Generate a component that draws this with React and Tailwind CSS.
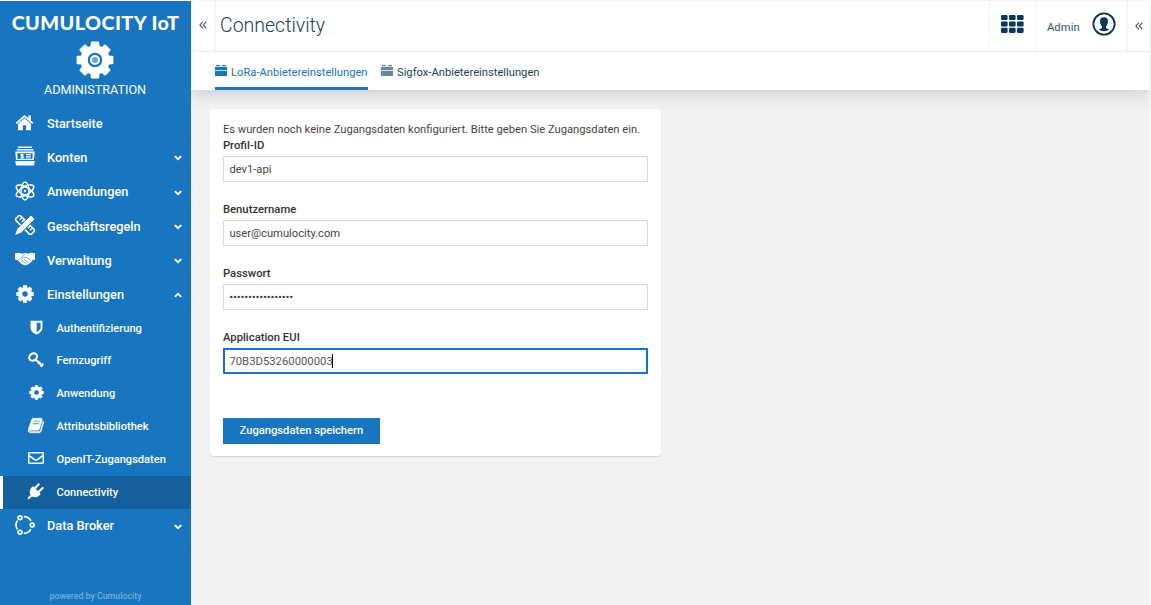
import React from 'react';
import { FaRegEnvelope } from 'react-icons/fa';

function gearPath(teeth, outer, inner, hole) {
  const pts = [];
  for (let i = 0; i < teeth; i++) {
    const a = (i * 2 * Math.PI) / teeth;
    const w = Math.PI / teeth;
    [[-0.62, inner], [-0.46, outer], [0.46, outer], [0.62, inner]].forEach(([k, r]) => {
      const t = a + k * w;
      pts.push(`${(12 + r * Math.sin(t)).toFixed(2)} ${(12 - r * Math.cos(t)).toFixed(2)}`);
    });
  }
  return `M${pts.join('L')}ZM${12 - hole} 12a${hole} ${hole} 0 1 0 ${2 * hole} 0a${hole} ${hole} 0 1 0 ${-2 * hole} 0Z`;
}

const Gear = ({ className, hole = 4.4 }) => (
  <svg viewBox="0 0 24 24" className={className} fill="currentColor" fillRule="evenodd" stroke="currentColor" strokeWidth="1.4" strokeLinejoin="round">
    <path d={gearPath(8, 11.1, 8.7, hole)} />
  </svg>
);

const Home = () => (
  <svg viewBox="0 0 20 18" className="-mt-0.5 h-[17px] w-[19px]" fill="currentColor">
    <path d="M10 1 0.6 9.3 1.8 10.5 10 3.4 18.2 10.5 19.4 9.3 16.8 7V1.6H14V4.5Z" />
    <path d="M10 4.4 3.2 10.2V17.2H8.3V12H11.7V17.2H16.8V10.2Z" />
  </svg>
);

const Accounts = () => (
  <svg viewBox="0 0 20 20" className="-mt-0.5 size-5" fill="currentColor">
    <path d="M3 .5H17V2H3ZM1.8 3H18.2V4.6H1.8Z" />
    <path fillRule="evenodd" d="M.3 5.6H19.7L19 14H1ZM2.2 7.2 2.7 13H17.3L17.8 7.2Z" />
    <path d="M5.4 8H8.4V11.2H9.4V12.5H5.2V11.2H6.3V9.4H5.4ZM11 8H15.8V9.1H11ZM11 9.8H15.8V10.8H11ZM11 11.4H15.8V12.5H11ZM.2 15H19.8L19 19.6H1Z" />
  </svg>
);

const Atom = () => (
  <svg viewBox="0 0 20 20" className="-mt-0.5 size-5" fill="none" stroke="currentColor" strokeWidth="1.5">
    <ellipse cx="10" cy="10" rx="4" ry="8.9" />
    <ellipse cx="10" cy="10" rx="4" ry="9.9" transform="rotate(60 10 10)" />
    <ellipse cx="10" cy="10" rx="4" ry="9.9" transform="rotate(-60 10 10)" />
    <circle cx="10" cy="10" r="1.3" fill="currentColor" stroke="none" />
  </svg>
);

const Tools = () => (
  <svg viewBox="0 0 20 20" className="-mt-0.5 size-5">
    <g transform="rotate(45 10 10)" fill="none" stroke="currentColor" strokeWidth="1.6">
      <path d="M-1 6.7H21V13.3H-1Z" />
      <path d="M2.6 7V10.2M5.6 7V10.2M14.4 7V10.2M17.4 7V10.2" strokeWidth="1.3" />
    </g>
    <path d="M16 0 20 4 6 18.2.2 19.9 1.8 14.1Z" fill="currentColor" stroke="#1776bf" strokeWidth=".9" />
    <path d="M1.6 16.3 3.8 18.5.2 19.9Z" fill="currentColor" />
  </svg>
);

const Handshake = () => (
  <svg viewBox="0 0 20 14" className="-mt-0.5 h-3.5 w-5">
    <path d="M0 1.3 4.2.8 7.2 1.8 10 .9 12.9 1.8 16 .8 20 1.3V7.5L17.4 8.2C16.6 10.2 12.8 13.2 10.4 13.3 7.8 13.3 4 10 2.8 8.2L0 7.5Z" fill="currentColor" />
    <path d="M9.6 2.4 6.7 5.2C7.4 6.5 9 6.1 10.5 4.9L15.8 8.7M9 7.4 13.5 10.8M7.3 8.8 11.3 12M3.2 7.8 5.4 6.6 8.6 9.6" fill="none" stroke="#1776bf" strokeWidth=".65" />
  </svg>
);

const Shield = () => (
  <svg viewBox="0 0 14 16" className="-mt-0.5 h-[15px] w-[13px]" fill="currentColor" fillRule="evenodd">
    <path d="M.6.8H13.4V8.5C13.4 11.7 10.2 14.2 7 15.6 3.8 14.2.6 11.7.6 8.5ZM7.2 2.8V13.1C9.6 11.8 11.4 10.1 11.4 8.4V2.8Z" />
  </svg>
);

const Key = () => (
  <svg viewBox="0 0 16 16" className="-mt-0.5 size-4" fill="none" stroke="currentColor">
    <ellipse cx="5.1" cy="5" rx="4.2" ry="3.4" transform="rotate(-40 5.1 5)" strokeWidth="2.1" />
    <path d="M7.6 7.4 14.8 14.2M10.3 12.2 12.3 9.8M12.5 14.6 15.2 11.5" strokeWidth="2" />
  </svg>
);

const Book = () => (
  <svg viewBox="0 0 1792 1792" className="-mt-0.5 size-[17px]" fill="currentColor" stroke="currentColor" strokeWidth="50">
    <path d="M1639 478q40 57 18 129l-275 906q-19 64-76.5 107.5t-122.5 43.5h-923q-77 0-148.5-53.5t-99.5-131.5q-24-67-2-127 0-4 3-27t4-37q1-8-3-21.5t-3-19.5q2-11 8-21t16.5-23.5 16.5-23.5q23-38 45-91.5t30-91.5q3-10 .5-30t-.5-28q3-11 17-28t17-23q21-36 42-92t25-90q1-9-2.5-32t.5-28q4-13 22-30.5t22-22.5q19-26 42.5-84.5t27.5-96.5q1-8-3-25.5t-2-26.5q2-8 9-18t18-23 17-21q8-12 16.5-30.5t15-35 16-36 19.5-32 26.5-23.5 36-11.5 47.5 5.5l-1 3q38-9 51-9h761q74 0 114 56t18 130l-274 906q-36 119-71.5 153.5t-128.5 34.5h-869q-27 0-38 15-11 16-1 43 24 70 144 70h923q29 0 56-15.5t35-41.5l300-987q7-22 5-57 38 15 59 43zm-1064 2q-4 13 2 22.5t20 9.5h608q13 0 25.5-9.5t16.5-22.5l21-64q4-13-2-22.5t-20-9.5h-608q-13 0-25.5 9.5t-16.5 22.5zm-83 256q-4 13 2 22.5t20 9.5h608q13 0 25.5-9.5t16.5-22.5l21-64q4-13-2-22.5t-20-9.5h-608q-13 0-25.5 9.5t-16.5 22.5z" />
  </svg>
);

const Plug = () => (
  <svg viewBox="0 0 17 17" className="-mt-0.5 -ml-px size-[17px]" fill="currentColor">
    <path d="M6.2 3.3C3.4 4.6 1.7 8.4 3.5 12L.4 15.1 1.9 16.6 4.9 13.6C8.6 15.3 12.3 13.6 13.6 10.7Z" />
    <path d="M7.9 5.4 11.7 1.3M11.5 9 15.7 5" stroke="currentColor" strokeWidth="2.1" strokeLinecap="round" />
  </svg>
);

const Broker = () => (
  <svg viewBox="0 0 20 20" className="-mt-0.5 size-5" fill="none" stroke="currentColor" strokeWidth="1.7">
    <circle cx="5" cy="2.8" r="1.9" />
    <circle cx="5" cy="17.2" r="1.9" />
    <circle cx="17.2" cy="10" r="1.9" />
    <path d="M2.4 5.6C.6 8.4.6 11.6 2.4 14.4M8.8 1.7C12 1.6 14.5 3.2 15.9 5.8M8.8 18.3C12 18.4 14.5 16.8 15.9 14.2" />
  </svg>
);

const Chevron = ({ up }) => (
  <svg viewBox="0 0 8 6" className={up ? 'h-1.5 w-2 rotate-180' : 'mt-0.5 h-1.5 w-2'} fill="none" stroke="currentColor" strokeWidth="2">
    <path d="M.8 1.1 4 4.2 7.2 1.1" />
  </svg>
);

const DoubleLeft = () => (
  <svg viewBox="0 0 8 8" className="size-2" fill="none" stroke="#3b5264" strokeWidth="1.1">
    <path d="M3.8.7.9 4 3.8 7.3M7.3.7 4.4 4 7.3 7.3" />
  </svg>
);

const Brick = ({ className }) => (
  <svg viewBox="0 0 12 11" className={className} fill="currentColor">
    <path d="M1 0H5V1.2H1ZM7 0H11V1.2H7ZM0 2H12V5.2H0ZM0 6.1H12V11H0Z" />
  </svg>
);

const Item = ({ icon, label, chevron }) => (
  <div className="flex h-[34.3px] items-center pr-[9px]">
    <span className="flex w-[49px] justify-center">{icon}</span>
    <span className="-ml-0.5 flex-1 text-[12.75px] leading-[19px] font-medium">{label}</span>
    {chevron && <Chevron up={chevron === 'up'} />}
  </div>
);

const SubItem = ({ icon, label, active }) => (
  <div className={active ? 'flex h-[32.8px] items-center border-l-[3px] border-white bg-[#14609d]' : 'flex h-[32.8px] items-center border-l-[3px] border-transparent'}>
    <span className="ml-[23px] flex w-5 justify-center">{icon}</span>
    <span className="ml-[10.5px] pt-px text-[11.1px] leading-4 font-medium">{label}</span>
  </div>
);

const Field = ({ label, value, focused, dots }) => (
  <div className="h-16">
    <div className="h-[17.4px] text-[11.3px] leading-[13px] font-medium text-[#333]">{label}</div>
    <div className={focused ? 'flex h-[26px] items-center border-2 border-[#1776bf] px-[4.5px]' : 'flex h-[26px] items-center border border-[#d5dade] px-[5.5px]'}>
      <span className={dots ? 'text-[9.5px] leading-4 font-bold tracking-[0.35px] text-[#333]' : focused ? 'pt-0.5 text-[11.3px] leading-4 text-[#555]' : 'pt-0.5 text-[11.2px] leading-4 text-[#444]'}>{value}</span>
      {focused && <span className="-ml-px h-3.5 w-px bg-black" />}
    </div>
  </div>
);

export default function App() {
  return (
    <div className="h-[605px] w-[1151px] overflow-hidden bg-white pt-px pr-px font-[Roboto,sans-serif]">
      <div className="flex h-[604px] bg-[#f1f2f4]">
        <aside className="z-20 flex w-[191px] shrink-0 flex-col bg-[#1776bf] text-white">
          <div className="flex h-[105px] flex-col items-center">
            <div className="mt-2 h-[26px] font-[Lato,sans-serif] text-[19.8px] leading-[26px] font-black tracking-[0.42px] whitespace-nowrap">CUMULOCITY IoT</div>
            <div className="mt-[5.5px] mr-px grid size-[38px] place-items-center">
              <Gear className="col-start-1 row-start-1 size-[38px]" hole={5.3} />
              <span className="col-start-1 row-start-1 size-2.5 rounded-full border-2 border-white bg-[#5ea6e6]" />
            </div>
            <div className="mt-[3.5px] mr-px text-[12.6px] leading-4">ADMINISTRATION</div>
          </div>
          <nav>
            <Item icon={<Home />} label="Startseite" />
            <Item icon={<Accounts />} label="Konten" chevron="down" />
            <Item icon={<Atom />} label="Anwendungen" chevron="down" />
            <Item icon={<Tools />} label="Geschäftsregeln" chevron="down" />
            <Item icon={<Handshake />} label="Verwaltung" chevron="down" />
            <Item icon={<Gear className="-mt-0.5 size-[18px]" />} label="Einstellungen" chevron="up" />
            <SubItem icon={<Shield />} label="Authentifizierung" />
            <SubItem icon={<Key />} label="Fernzugriff" />
            <SubItem icon={<Gear className="-mt-0.5 size-[15px]" />} label="Anwendung" />
            <SubItem icon={<Book />} label="Attributsbibliothek" />
            <SubItem icon={<FaRegEnvelope className="-mt-0.5 size-4" />} label="OpenIT-Zugangsdaten" />
            <SubItem icon={<Plug />} label="Connectivity" active />
            <Item icon={<Broker />} label="Data Broker" chevron="down" />
          </nav>
          <div className="mt-auto mb-[3px] text-center text-[8.8px] leading-3 font-medium text-[#74aedd]">powered by Cumulocity</div>
        </aside>
        <div className="flex min-w-0 flex-1 flex-col">
          <div className="z-10 shrink-0 bg-white shadow-[0_4px_16px_rgba(0,0,0,0.16)]">
            <header className="flex h-[51px] border-b border-[#e6e8ea]">
              <div className="flex w-[25px] items-center justify-center border-r border-[#eff0f1] pb-[3px]"><DoubleLeft /></div>
              <h1 className="flex-1 pl-1 text-[19.5px] leading-[49px] font-light text-[#1d3e59]">Connectivity</h1>
              <div className="flex w-[46px] justify-center border-l border-[#eff0f1] pt-3.5">
                <svg viewBox="0 0 23 18" className="h-[18px] w-[23px]" fill="#07355b">
                  {[0, 8, 16].map((x) => [0, 6.4, 12.8].map((y) => <rect key={`${x}-${y}`} x={x} y={y} width="6.6" height="5.1" rx="1.1" />))}
                </svg>
              </div>
              <div className="flex w-[92px] border-l border-[#eff0f1] pl-[11px]">
                <span className="w-[45px] pt-[19px] text-[11.3px] leading-4 text-[#31516b]">Admin</span>
                <svg viewBox="0 0 24 24" className="mt-[11px] size-6">
                  <circle cx="12" cy="12" r="10.6" fill="none" stroke="#07355b" strokeWidth="1.8" />
                  <path d="M12 5.2C9 5.2 7.7 7.3 8.1 9.9 8.2 12 9 13.2 10 14.3V16L6.8 17.6C9.5 19.8 14.5 19.8 17.2 17.6L14 16V14.3C15 13.2 15.8 12 15.9 9.9 16.3 7.3 15 5.2 12 5.2Z" fill="#07355b" />
                </svg>
              </div>
              <div className="flex w-[23px] items-center justify-center border-l border-[#eff0f1]"><DoubleLeft /></div>
            </header>
            <div className="flex h-[38px] gap-[13px] pl-6 text-[11.2px] leading-4">
              <div className="flex h-[38px] w-[153px] border-b-[3px] border-[#1776bf] pt-3 whitespace-nowrap text-[#1776bf]">
                <Brick className="mt-px mr-1 h-[11px] w-3 shrink-0" /><span className="pt-px">LoRa-Anbietereinstellungen</span>
              </div>
              <div className="flex pt-3 whitespace-nowrap text-[#1d3e59]">
                <Brick className="mt-px mr-1 h-[11px] w-3 shrink-0 text-[#6b859c]" /><span className="pt-px">Sigfox-Anbietereinstellungen</span>
              </div>
            </div>
          </div>
          <main className="mt-[19px] ml-[19.4px] h-[346.5px] w-[451px] rounded-sm bg-white pt-3 pr-[13px] pl-[12.5px] shadow-[0_1px_1px_rgba(0,0,0,0.12)]">
            <p className="h-[18px] pt-px text-[11.2px] leading-4 whitespace-nowrap text-[#444]">Es wurden noch keine Zugangsdaten konfiguriert. Bitte geben Sie Zugangsdaten ein.</p>
            <Field label="Profil-ID" value="dev1-api" />
            <Field label="Benutzername" value="user@cumulocity.com" />
            <Field label="Passwort" value="•••••••••••••••••" dots />
            <Field label="Application EUI" value="70B3D53260000003" focused />
            <button className="mt-[23px] h-[26px] w-[157px] bg-[#1776bf] text-[11.2px] font-medium text-white">Zugangsdaten speichern</button>
          </main>
        </div>
      </div>
    </div>
  );
}
